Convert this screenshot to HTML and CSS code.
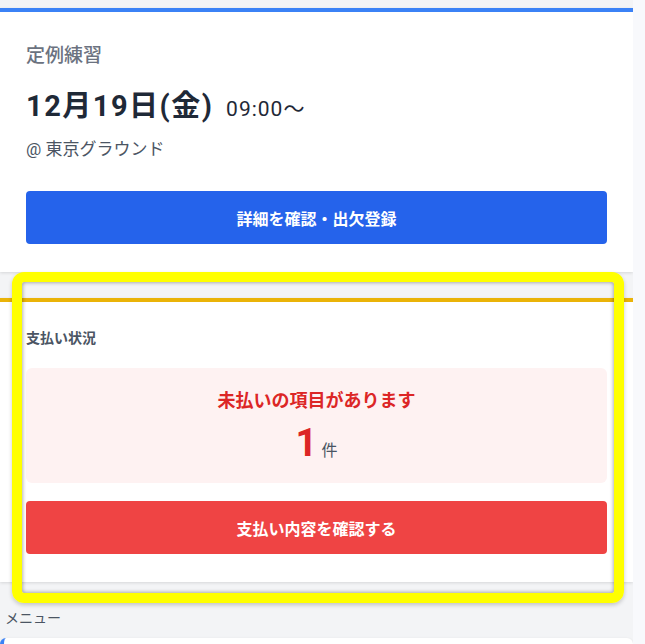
FILE: index.html
```html
<!DOCTYPE html>
<html lang="ja">
<head>
    <meta charset="UTF-8">
    <meta name="viewport" content="width=device-width, initial-scale=1.0">
    <title>ダッシュボード</title>
    <link rel="stylesheet" href="styles.css">
</head>
<body>
    <div class="page">
        <div class="card card-event">
            <p class="event-type">定例練習</p>
            <h2 class="event-date">12月19日(金) <span class="event-time">09:00〜</span></h2>
            <p class="event-place">@ 東京グラウンド</p>
            <button class="btn btn-blue">詳細を確認・出欠登録</button>
        </div>

        <div class="card card-payment">
            <p class="section-label">支払い状況</p>
            <div class="alert-box">
                <p class="alert-title">未払いの項目があります</p>
                <p class="alert-count"><span class="count-num">1</span><span class="count-unit">件</span></p>
            </div>
            <button class="btn btn-red">支払い内容を確認する</button>
        </div>

        <p class="menu-label">メニュー</p>
        <div class="card card-menu"></div>

        <div class="highlight"></div>
    </div>
</body>
</html>
```

FILE: styles.css
```css
body {
    margin: 0;
    background-color: #f8f9fc;
    font-family: Roboto, "Noto Sans CJK JP", sans-serif;
    color: #1f2937;
}

.page {
    position: relative;
    width: 633px;
    height: 644px;
    background-color: #f3f4f6;
    padding-top: 8px;
    box-sizing: border-box;
    overflow: hidden;
}

.card {
    background-color: #fff;
    box-shadow: 0 1px 3px rgba(0, 0, 0, 0.12);
}

.card-event {
    border-top: 4px solid #3b82f6;
    padding: 31px 26px 26px;
    height: 203px;
}

.event-type {
    margin: 0;
    font-size: 19px;
    font-weight: 500;
    color: #6b7280;
    line-height: 26px;
}

.event-date {
    margin: 19px 0 0;
    font-size: 29px;
    font-weight: 700;
    line-height: 36px;
    letter-spacing: 1.5px;
    color: #1f2937;
}

.event-time {
    margin-left: 4px;
    font-size: 21px;
    font-weight: 400;
    letter-spacing: 1px;
}

.event-place {
    margin: 10px 0 0;
    font-size: 17px;
    color: #4b5563;
    line-height: 24px;
}

.btn {
    display: block;
    width: 100%;
    height: 53px;
    border: none;
    border-radius: 4px;
    color: #fff;
    font-family: inherit;
    font-size: 16px;
    font-weight: 700;
    cursor: pointer;
}

.btn-blue {
    margin-top: 30px;
    background-color: #2563eb;
}

.btn-red {
    margin-top: 18px;
    background-color: #ef4444;
}

.card-payment {
    margin-top: 26px;
    border-top: 4px solid #eab308;
    padding: 26px 26px 26px;
    height: 228px;
}

.section-label {
    margin: 0;
    font-size: 14px;
    font-weight: 700;
    color: #4b5563;
    line-height: 20px;
}

.alert-box {
    margin-top: 20px;
    background-color: #fef2f2;
    border-radius: 6px;
    height: 115px;
    display: flex;
    flex-direction: column;
    align-items: center;
    padding-top: 21px;
    box-sizing: border-box;
}

.alert-title {
    margin: 0;
    font-size: 18px;
    font-weight: 700;
    color: #dc2626;
    line-height: 24px;
}

.alert-count {
    margin: 8px 0 0;
    line-height: 44px;
}

.count-num {
    font-size: 38px;
    font-weight: 700;
    color: #dc2626;
}

.count-unit {
    margin-left: 4px;
    font-size: 16px;
    color: #4b5563;
}

.menu-label {
    margin: 26px 0 0 5px;
    font-size: 14px;
    color: #4b5563;
    line-height: 20px;
}

.card-menu {
    margin-top: 10px;
    height: 40px;
    border-left: 4px solid #3b82f6;
    border-radius: 6px;
}

.highlight {
    position: absolute;
    left: 12px;
    top: 272px;
    width: 592px;
    height: 311px;
    border: 10px solid #ffff00;
    border-radius: 12px;
    box-shadow: inset 0 0 4px rgba(0, 0, 0, 0.45), 0 2px 4px rgba(0, 0, 0, 0.2);
    pointer-events: none;
}
```
